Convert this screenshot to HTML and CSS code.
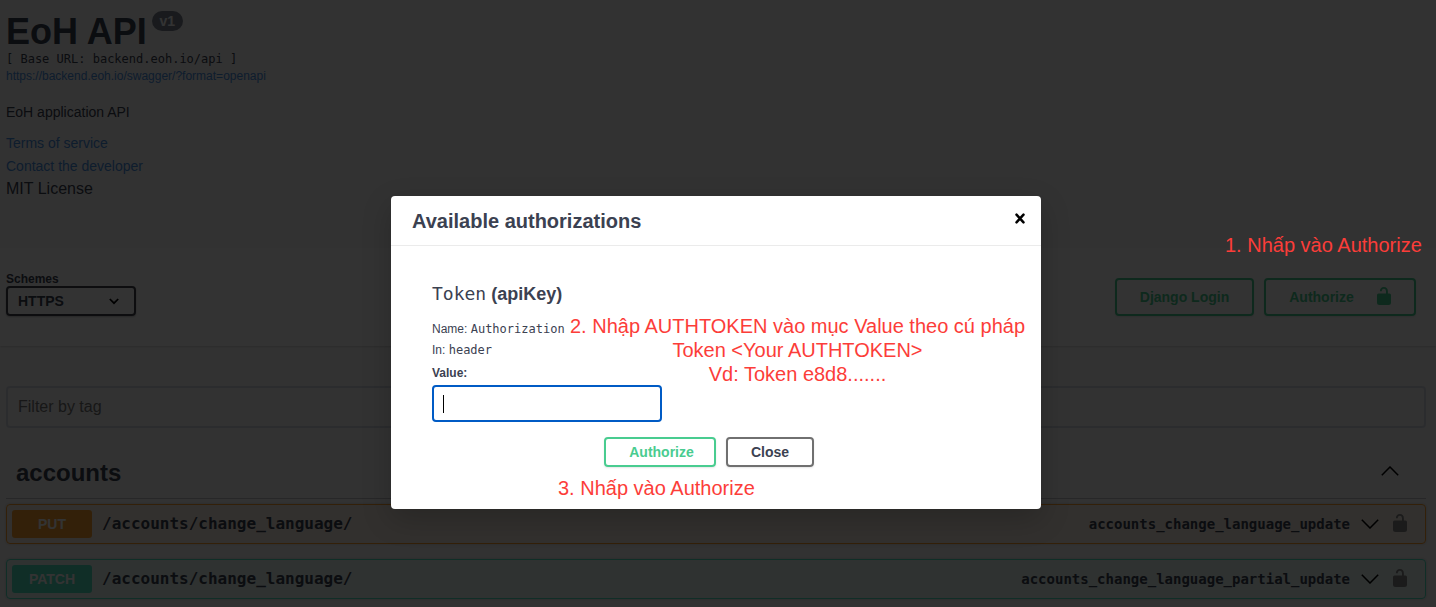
FILE: index.html
```html
<!DOCTYPE html>
<html lang="vi">
<head>
<meta charset="utf-8">
<title>EoH API</title>
<link rel="stylesheet" href="styles.css">
</head>
<body>
<svg class="symbols" width="0" height="0" aria-hidden="true">
  <symbol id="lock-open" viewBox="0 0 14 18"><path d="M1.500 6.500H9V4.600C9 2.700 8.400 1.700 6.900 1.700 5.400 1.700 4.800 2.600 4.800 4.300H2.900C2.900 1.600 4.300 0 6.900 0 9.500 0 10.900 1.600 10.900 4.600V6.500H12.500A1.500 1.500 0 0 1 14 8V15.500A2.500 2.500 0 0 1 11.500 18H2.500A2.500 2.500 0 0 1 0 15.500V8A1.500 1.500 0 0 1 1.500 6.500z"/></symbol>
</svg>
<div class="page">
  <header class="info">
    <h1 class="title">EoH API<span class="version">v1</span></h1>
    <pre class="base-url">[ Base URL: backend.eoh.io/api ]</pre>
    <a class="spec-link">https://backend.eoh.io/swagger/?format=openapi</a>
    <p class="description">EoH application API</p>
    <a class="info-link">Terms of service</a>
    <a class="info-link">Contact the developer</a>
    <div class="license">MIT License</div>
  </header>
  <section class="schemes">
    <div class="scheme-picker">
      <span class="schemes-title">Schemes</span>
      <div class="select">HTTPS
        <svg width="10" height="7" viewBox="0 0 10 7"><path d="M.8 1 5 5.200 9.200 1" fill="none" stroke="#000" stroke-width="1.700"/></svg>
      </div>
    </div>
    <div class="auth-wrapper">
      <button class="btn btn-login">Django Login</button>
      <button class="btn btn-auth">Authorize <svg width="14" height="18"><use href="#lock-open"/></svg></button>
    </div>
  </section>
  <div class="filter">Filter by tag</div>
  <section class="tag">
    <h3 class="tag-head">accounts
      <svg width="18" height="10" viewBox="0 0 18 10"><path d="M.8 9.200 9 1 17.200 9.200" fill="none" stroke="#000" stroke-width="1.500"/></svg>
    </h3>
    <div class="op op-put">
      <span class="method">PUT</span><span class="path">/accounts/change_language/</span>
      <span class="op-id">accounts_change_language_update</span>
      <svg class="arrow" width="18" height="10" viewBox="0 0 18 10"><path d="M.8 .8 9 9 17.200 .8" fill="none" stroke="#000" stroke-width="1.500"/></svg>
      <svg class="op-lock" width="14" height="18"><use href="#lock-open"/></svg>
    </div>
    <div class="op op-patch">
      <span class="method">PATCH</span><span class="path">/accounts/change_language/</span>
      <span class="op-id">accounts_change_language_partial_update</span>
      <svg class="arrow" width="18" height="10" viewBox="0 0 18 10"><path d="M.8 .8 9 9 17.200 .8" fill="none" stroke="#000" stroke-width="1.500"/></svg>
      <svg class="op-lock" width="14" height="18"><use href="#lock-open"/></svg>
    </div>
  </section>
</div>
<div class="backdrop">
  <div class="modal">
    <div class="modal-head">
      <h3>Available authorizations</h3>
      <svg width="10" height="11" viewBox="0 0 10 11"><path d="M1.500 1.700 8.500 9.300M8.500 1.700 1.500 9.300" stroke="#000" stroke-width="2.500" stroke-linecap="round"/></svg>
    </div>
    <div class="modal-body">
      <h4><code>Token</code> (apiKey)</h4>
      <p class="field">Name: <code>Authorization</code></p>
      <p class="field">In: <code>header</code></p>
      <label class="value-label">Value:</label>
      <div class="value-input"><span class="caret"></span></div>
      <div class="modal-actions">
        <button class="btn btn-small btn-submit">Authorize</button>
        <button class="btn btn-small btn-close">Close</button>
      </div>
    </div>
  </div>
</div>
<div class="note note-1">1. Nhấp vào Authorize</div>
<div class="note note-2">2. Nhập AUTHTOKEN vào mục Value theo cú pháp<br>Token &lt;Your AUTHTOKEN&gt;<br>Vd: Token e8d8.......</div>
<div class="note note-3">3. Nhấp vào Authorize</div>
</body>
</html>
```

FILE: styles.css
```css
* { box-sizing: border-box; }
body {
  margin: 0;
  height: 607px;
  overflow: hidden;
  background: #fafafa;
  color: #3b4151;
  font-family: "Liberation Sans", Arial, sans-serif;
}
h1, h3, h4, p, pre { margin: 0; }
code, pre, .path, .op-id { font-family: "DejaVu Sans Mono", monospace; }
svg { display: block; flex: none; }
.symbols { position: absolute; }
.page { height: 607px; overflow: hidden; }

.info { height: 248px; padding: 13px 6px 0; }
.title { display: flex; align-items: flex-start; font-size: 36px; line-height: 37px; height: 38px; }
.version {
  margin: -2px 0 0 5px;
  width: 31px;
  height: 20px;
  border-radius: 10px;
  background: #7d8492;
  color: #fff;
  font-size: 14px;
  line-height: 20px;
  text-align: center;
}
.base-url { font-size: 12px; line-height: 16px; }
.spec-link { display: block; padding-top: 1px; font-size: 12px; line-height: 17px; color: #4990e2; }
.description { font-size: 14px; line-height: 20px; padding-top: 17px; }
.info-link { display: block; font-size: 14px; line-height: 23px; color: #4990e2; }
.description + .info-link { margin-top: 10px; }
.license { font-size: 16px; line-height: 21px; }

.schemes {
  display: flex;
  justify-content: space-between;
  height: 98px;
  padding: 24px 20px 0 6px;
  background: #fff;
  box-shadow: 0 1px 2px rgba(0, 0, 0, .15);
}
.schemes-title { display: block; font-size: 12px; font-weight: bold; line-height: 14px; }
.select {
  display: flex;
  align-items: center;
  justify-content: space-between;
  width: 130px;
  height: 30px;
  padding: 0 15px 0 10px;
  border: 2px solid #41444e;
  border-radius: 4px;
  box-shadow: 0 1px 2px rgba(0, 0, 0, .25);
  font-size: 14px;
  font-weight: bold;
}
.auth-wrapper { display: flex; gap: 10px; padding-top: 6px; }
.btn {
  display: flex;
  align-items: center;
  justify-content: center;
  padding: 0;
  border: 2px solid #49cc90;
  border-radius: 4px;
  background: transparent;
  box-shadow: 0 1px 2px rgba(0, 0, 0, .1);
  color: #49cc90;
  font: bold 14px "Liberation Sans", Arial, sans-serif;
}
.btn svg { fill: #49cc90; }
.btn-login { width: 139px; height: 38px; }
.btn-auth { width: 152px; height: 38px; gap: 23px; }
.btn-auth svg { margin-top: -2px; }

.filter {
  margin: 40px 10px 0 6px;
  height: 42px;
  padding-left: 10px;
  border: 2px solid #d8dde7;
  border-radius: 4px;
  color: #757575;
  font-size: 16px;
  line-height: 38px;
}
.tag { padding: 21px 10px 0 6px; }
.tag-head {
  display: flex;
  align-items: center;
  justify-content: space-between;
  height: 50px;
  margin-bottom: 5px;
  padding: 0 27px 2px 10px;
  border-bottom: 1px solid rgba(59, 65, 81, .3);
  font-size: 24px;
}
.tag-head svg { margin-top: -4px; }
.op {
  display: flex;
  align-items: center;
  height: 40px;
  margin-bottom: 15px;
  padding: 0 18px 0 5px;
  border: 1px solid;
  border-radius: 4px;
  box-shadow: 0 0 3px rgba(0, 0, 0, .19);
}
.op-put { border-color: #fca130; background: rgba(252, 161, 48, .1); }
.op-patch { border-color: #50e3c2; background: rgba(80, 227, 194, .1); }
.method {
  width: 80px;
  height: 28px;
  border-radius: 3px;
  color: #fff;
  font-size: 14px;
  font-weight: bold;
  line-height: 28px;
  text-align: center;
}
.op-put .method { background: #fca130; }
.op-patch .method { background: #50e3c2; }
.path { margin-left: 10px; padding-bottom: 2px; font-size: 16px; font-weight: bold; }
.op-id { margin-left: auto; font-size: 14px; font-weight: bold; }
.arrow { margin-left: 11px; }
.op-lock { margin: -3px 0 0 14px; fill: #888; }

.backdrop {
  position: absolute;
  inset: 0;
  display: flex;
  justify-content: center;
  align-items: flex-start;
  padding: 195.500px 4px 0 0;
  background: rgba(0, 0, 0, .8);
}
.modal {
  width: 650px;
  height: 313px;
  border-radius: 4px;
  background: #fff;
  box-shadow: 0 10px 30px rgba(0, 0, 0, .2);
}
.modal-head {
  display: flex;
  align-items: center;
  justify-content: space-between;
  height: 50px;
  padding: 0 16px 0 21px;
  border-bottom: 1px solid #ebebeb;
}
.modal-head h3 { font-size: 20px; line-height: 24px; padding-top: 1px; }
.modal-head svg { margin-top: -4px; }
.modal-body { padding: 35px 41px 0; }
.modal-body h4 { font-size: 18px; line-height: 26px; height: 38px; }
.modal-body h4 code { font-weight: normal; }
.field { font-size: 12px; line-height: 21px; }
.value-label { display: block; font-size: 12px; font-weight: bold; line-height: 24px; height: 24.500px; }
.value-input {
  display: flex;
  align-items: center;
  width: 230px;
  height: 37px;
  padding-left: 9px;
  border: 2px solid #005bc5;
  border-radius: 4px;
}
.caret { width: 1px; height: 18px; background: #000; }
.modal-actions { display: flex; gap: 10px; padding: 15px 0 0 172px; }
.btn-small { width: 112px; height: 30px; }
.btn-submit { padding-left: 3px; }
.btn-close { width: 88px; border-color: #707070; color: #3b4151; }

.note {
  position: absolute;
  color: #fc3d39;
  font-size: 20px;
  line-height: 24px;
  text-align: center;
  white-space: nowrap;
}
.note-1 { left: 1225px; top: 233px; }
.note-2 { left: 569.500px; top: 314px; width: 456px; }
.note-3 { left: 558px; top: 476px; }
```
